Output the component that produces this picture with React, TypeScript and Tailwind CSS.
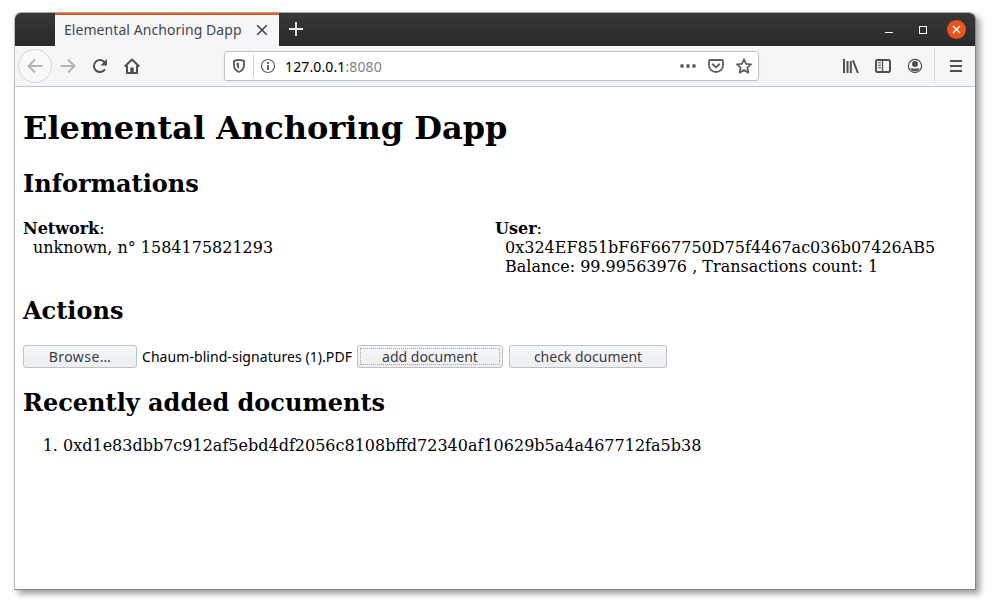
import React from "react";

const ui = "font-['Noto_Sans','Open_Sans',sans-serif]";

function Icon({ children, size = 16, className = "" }: { children: React.ReactNode; size?: number; className?: string }) {
  return (
    <svg width={size} height={size} viewBox="0 0 16 16" fill="none" stroke="currentColor" strokeWidth="2" className={`block shrink-0 ${className}`}>
      {children}
    </svg>
  );
}

function TitleBar() {
  return (
    <div className="flex h-[33px] bg-gradient-to-b from-[#383734] to-[#2c292a]">
      <div className="ml-10 flex h-full w-56 items-center border-t-2 border-[#e95420] bg-[#f5f6f8] pl-[9px] text-[#46464b]">
        <span className="w-[190px] whitespace-nowrap pb-0.5 text-[14px] tracking-[0.06px]">Elemental Anchoring Dapp</span>
        <Icon className="mb-0.5">
          <path d="M3.2 3.2l9.6 9.6M12.8 3.2l-9.6 9.6" strokeWidth="1.6" />
        </Icon>
      </div>
      <Icon className="ml-[9px] mt-2 text-[#e8e8e8]">
        <path d="M8 1v14M1 8h14" strokeWidth="1.8" />
      </Icon>
      <div className="ml-auto flex items-center pr-[9px] text-white">
        <div className="mr-[26px] mt-[5px] h-px w-2 bg-white" />
        <div className="mr-5 h-2 w-2 border border-white" />
        <div className="flex h-[19px] w-[19px] items-center justify-center rounded-full bg-[#e95420]">
          <svg width="9" height="9" viewBox="0 0 9 9" fill="none" stroke="white" strokeWidth="1.4">
            <path d="M1 1l7 7M8 1L1 8" />
          </svg>
        </div>
      </div>
    </div>
  );
}

function AddressBar() {
  return (
    <div className="ml-[84px] flex h-[30px] w-[535px] items-center rounded-[3px] border border-[#c0c4ca] bg-white pl-[6px] pr-[6px] text-[#606063] shadow-[0_1px_3px_rgba(0,0,0,0.05)]">
      <Icon>
        <path d="M8 2c1.8 0 3.3.3 5 .9V7c0 3.4-1.6 5.5-5 7-3.4-1.5-5-3.6-5-7V2.900C4.700 2.300 6.200 2 8 2z" strokeWidth="1.9" />
        <path d="M8 4.700v6.500C6.300 10 5.600 8.900 5.600 7V5c.8-.2 1.600-.3 2.400-.3z" fill="currentColor" stroke="none" />
      </Icon>
      <div className="ml-[6px] h-[22px] w-px bg-[#c8ccd0]" />
      <Icon className="ml-[6px]">
        <circle cx="8" cy="8" r="6.500" strokeWidth="1.200" />
        <path d="M8 7v5" strokeWidth="1.900" />
        <path d="M8 3.900v2" strokeWidth="1.900" />
      </Icon>
      <span className="ml-[9px] whitespace-nowrap text-[14px] tracking-[0.12px] text-black">
        127.0.0.1<span className="text-[#848486]">:8080</span>
      </span>
      <div className="ml-auto flex gap-3">
        <Icon>
          <g fill="currentColor" stroke="none">
            <circle cx="2" cy="8" r="1.900" />
            <circle cx="8" cy="8" r="1.900" />
            <circle cx="14" cy="8" r="1.900" />
          </g>
        </Icon>
        <Icon>
          <path d="M2.200 2h11.600c.7 0 1.200.5 1.200 1.200V7.500a7 6.500 0 0 1-14 0V3.200C1 2.500 1.500 2 2.200 2z" strokeWidth="1.800" />
          <path d="M4.700 6.300L8 9.400l3.300-3.100" strokeLinecap="round" strokeLinejoin="round" strokeWidth="1.900" />
        </Icon>
        <Icon>
          <path d="M8 1.300l2.050 4.500 4.950.5-3.700 3.300 1.100 5L8 12.100l-4.400 2.500 1.100-5L1 6.300l4.950-.5z" strokeWidth="1.800" strokeLinejoin="round" />
        </Icon>
      </div>
    </div>
  );
}

function Toolbar() {
  return (
    <div className="flex h-[41px] items-center border-b border-[#c2c7cd] bg-[#f5f6f8] pl-[3px] pr-[11px] text-[#505053]">
      <div className="flex h-[34px] w-[34px] shrink-0 items-center justify-center rounded-full border border-[#d5d6d8] bg-[#f9f9fa] text-[#b4b4b6]">
        <Icon>
          <path d="M15.500 8H1.500M8 1.500L1.500 8 8 14.500" />
        </Icon>
      </div>
      <Icon className="ml-2 text-[#b4b4b6]">
        <path d="M.5 8h14M8 1.500L14.500 8 8 14.500" />
      </Icon>
      <Icon className="ml-4">
        <path d="M13 11.200A6 6 0 1 1 12.800 4.500" />
        <path d="M15 1v6.500H8.500z" fill="currentColor" stroke="none" />
      </Icon>
      <Icon className="ml-4">
        <path d="M.7 8.500L8 1.500l7.300 7" strokeLinejoin="round" />
        <path d="M3 7.500V15h10V7.500" />
        <path d="M6.300 15V9.500h3.400V15z" fill="currentColor" stroke="none" />
      </Icon>
      <AddressBar />
      <div className="ml-auto flex items-center">
        <Icon>
          <path d="M1 1v14M4.500 3v12M7.800 3v12" strokeWidth="2" />
          <path d="M10 2.300L14.900 15" strokeWidth="2" />
        </Icon>
        <Icon className="ml-4">
          <rect x="1" y="2" width="14" height="12" rx="1.800" />
          <path d="M7.500 2v12" strokeWidth="1.300" />
          <path d="M3 4.700h3M3 7.200h3M3 9.700h3" strokeWidth="1.100" />
        </Icon>
        <Icon className="ml-4">
          <circle cx="8" cy="8" r="6.600" strokeWidth="1.200" />
          <circle cx="8" cy="6" r="3" fill="currentColor" stroke="none" />
          <path d="M3.400 10.500c1.500-.7 2.700.2 4.600.2s3.100-.9 4.600-.2C11.800 12.500 10 13.300 8 13.300s-3.800-.8-4.600-2.800z" fill="currentColor" stroke="none" />
        </Icon>
        <div className="ml-[11px] h-[34px] w-px bg-[#d7d8da]" />
        <Icon className="ml-[13px]">
          <path d="M2 3h12M2 8h12M2 13h12" />
        </Icon>
      </div>
    </div>
  );
}

function Button({ children, className, focused = false }: { children: React.ReactNode; className: string; focused?: boolean }) {
  return (
    <button className={`h-[23px] rounded-[3px] border border-[#bdc2c9] bg-gradient-to-b from-[#f6f7f8] to-[#edeef0] p-[2px] text-[14px] leading-none text-[#3c3c3e] ${ui} ${className}`}>
      <span className={`flex h-full items-center justify-center whitespace-nowrap border border-dotted pt-px ${focused ? "border-[#a6a6a8]" : "border-transparent"}`}>{children}</span>
    </button>
  );
}

function Heading({ children, className }: { children: React.ReactNode; className: string }) {
  return <h2 className={`h-7 text-2xl leading-7 font-bold ${className}`}>{children}</h2>;
}

export default function App() {
  return (
    <div className="h-[608px] w-[994px] overflow-hidden bg-white pl-[14px] pt-3">
      <div className={`h-[578px] w-[962px] overflow-hidden rounded-t-[7px] border border-t-[#aaaaaa] border-r-[#858585] border-b-[#858585] border-l-[#bdbdbd] bg-white shadow-[4px_4px_6px_rgba(0,0,0,0.38)] ${ui}`}>
        <TitleBar />
        <Toolbar />
        <main className="px-2 pt-[23px] font-['DejaVu_Serif',serif] text-base leading-[19px] text-black">
          <h1 className="h-[37px] text-[32px] leading-[37px] font-bold">Elemental Anchoring Dapp</h1>
          <Heading className="mt-[23px]">Informations</Heading>
          <div className="mt-[21px] grid grid-cols-2">
            <section>
              <p><b>Network</b>:</p>
              <p className="pl-[10px]">unknown, n° 1584175821293</p>
            </section>
            <section>
              <p><b>User</b>:</p>
              <p className="pl-[10px] whitespace-nowrap">0x324EF851bF6F667750D75f4467ac036b07426AB5</p>
              <p className="pl-[10px] whitespace-nowrap">Balance: 99.99563976 , Transactions count: 1</p>
            </section>
          </div>
          <Heading className="mt-[21px]">Actions</Heading>
          <div className="mt-5 flex h-[23px] items-center">
            <Button className="w-[114px] tracking-[0.45px]">Browse…</Button>
            <span className={`ml-[5px] w-[215px] whitespace-nowrap text-[14px] tracking-[0.06px] ${ui}`}>Chaum-blind-signatures (1).PDF</span>
            <Button className="w-[146px]" focused>add document</Button>
            <Button className="ml-[6px] w-[158px]">check document</Button>
          </div>
          <Heading className="mt-[21px]">Recently added documents</Heading>
          <ol className="mt-[19px] list-decimal pl-10">
            <li>0xd1e83dbb7c912af5ebd4df2056c8108bffd72340af10629b5a4a467712fa5b38</li>
          </ol>
        </main>
      </div>
    </div>
  );
}
